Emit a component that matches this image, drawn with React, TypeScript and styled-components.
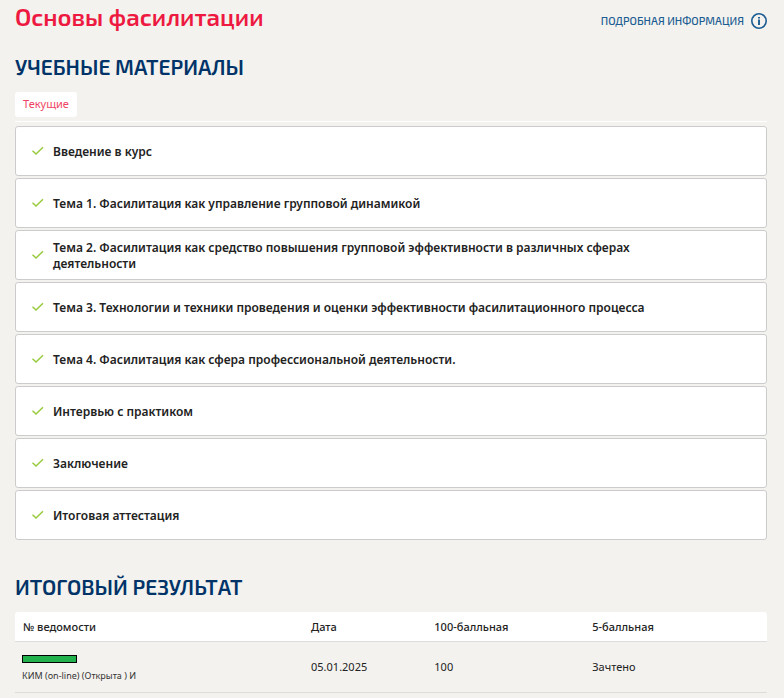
import React from "react";
import styled, { createGlobalStyle } from "styled-components";

const GlobalStyle = createGlobalStyle`
  *, *::before, *::after {
    box-sizing: border-box;
  }

  body {
    margin: 0;
    background: #f3f2ee;
    color: #222222;
    font-family: "Noto Sans", "Open Sans", sans-serif;
    font-size: 12px;
    line-height: 16px;
  }
`;

const headingFont = `"Exo 2", Roboto, "Noto Sans", sans-serif`;

const Page = styled.main`
  padding: 3px 17px 0 15px;
`;

const Header = styled.header`
  display: flex;
  align-items: center;
  justify-content: space-between;
  gap: 16px;
`;

const Title = styled.h1`
  margin: 0;
  font: 600 24px/28px ${headingFont};
  color: #ed1941;
`;

const InfoLink = styled.a`
  display: flex;
  align-items: center;
  gap: 7px;
  padding-top: 8px;
  font: 500 11px/16px ${headingFont};
  text-transform: uppercase;
  text-decoration: none;
  color: #1b5c92;
`;

const SectionTitle = styled.h2<{ $top: number; $bottom: number }>`
  margin: ${(p) => p.$top}px 0 ${(p) => p.$bottom}px;
  font: 600 21px/24px ${headingFont};
  text-transform: uppercase;
  color: #003368;
`;

const Tabs = styled.div`
  display: flex;
  padding-bottom: 4px;
  border-bottom: 1px solid #ffffff;
`;

const Tab = styled.button`
  height: 25px;
  padding: 0 8px 2px;
  border: 0;
  border-radius: 3px;
  background: #ffffff;
  color: #ef4565;
  font: 400 11px/16px "Noto Sans", sans-serif;
`;

const TopicList = styled.ul`
  display: flex;
  flex-direction: column;
  gap: 2px;
  margin: 4px 0 0;
  padding: 0;
  list-style: none;
`;

const Topic = styled.li`
  display: flex;
  align-items: center;
  gap: 9px;
  min-height: 50px;
  padding: 6px 100px 6px 16px;
  border: 1px solid #cccccc;
  border-radius: 3px;
  background: #ffffff;

  svg {
    flex: none;
  }
`;

const TopicName = styled.span`
  padding-top: 2px;
  font-weight: 600;
`;

const Results = styled.table`
  width: 100%;
  table-layout: fixed;
  border-collapse: separate;
  border-spacing: 0;
  font-size: 11px;
`;

const Column = styled.col<{ $share?: string }>`
  width: ${(p) => p.$share ?? "auto"};
`;

const HeadCell = styled.th`
  height: 30px;
  padding: 0 8px;
  border-bottom: 1px solid #dddddb;
  background: #ffffff;
  font-weight: 500;
  text-align: left;

  &:first-child {
    border-top-left-radius: 3px;
  }

  &:last-child {
    border-top-right-radius: 3px;
  }
`;

const Cell = styled.td`
  height: 51px;
  padding: 0 8px;
  border-bottom: 1px solid #dddddb;
  vertical-align: middle;
`;

const RecordCell = styled(Cell)`
  padding: 4px 7px 0;
  font-size: 9px;
`;

const Redaction = styled.div`
  width: 55px;
  height: 8px;
  margin-bottom: 5px;
  border: 1px solid #000000;
  background: #22b14c;
`;

const RecordName = styled.div`
  color: #333333;
`;

const topics = [
  "Введение в курс",
  "Тема 1. Фасилитация как управление групповой динамикой",
  "Тема 2. Фасилитация как средство повышения групповой эффективности в различных сферах деятельности",
  "Тема 3. Технологии и техники проведения и оценки эффективности фасилитационного процесса",
  "Тема 4. Фасилитация как сфера профессиональной деятельности.",
  "Интервью с практиком",
  "Заключение",
  "Итоговая аттестация",
];

const CheckIcon = () => (
  <svg width="12" height="10" viewBox="0 0 12 10" fill="none" aria-hidden="true">
    <path d="M0.5 4.8L4 8L11 1.2" stroke="#98cb3c" strokeWidth="1.5" />
  </svg>
);

const InfoIcon = () => (
  <svg width="16" height="16" viewBox="0 0 16 16" fill="none" aria-hidden="true">
    <circle cx="8" cy="8" r="7.2" stroke="#1b5c92" strokeWidth="1.6" />
    <path d="M8 4V5.6M8 6.6V12" stroke="#1b5c92" strokeWidth="1.9" />
  </svg>
);

export default function App() {
  return (
    <>
      <GlobalStyle />
      <Page>
        <Header>
          <Title>Основы фасилитации</Title>
          <InfoLink href="#info">
            Подробная информация
            <InfoIcon />
          </InfoLink>
        </Header>

        <SectionTitle $top={24} $bottom={13}>
          Учебные материалы
        </SectionTitle>
        <Tabs>
          <Tab type="button">Текущие</Tab>
        </Tabs>
        <TopicList>
          {topics.map((topic) => (
            <Topic key={topic}>
              <CheckIcon />
              <TopicName>{topic}</TopicName>
            </Topic>
          ))}
        </TopicList>

        <SectionTitle $top={35} $bottom={13}>
          Итоговый результат
        </SectionTitle>
        <Results>
          <colgroup>
            <Column $share="38.3%" />
            <Column $share="16.4%" />
            <Column $share="21%" />
            <Column />
          </colgroup>
          <thead>
            <tr>
              <HeadCell scope="col">№ ведомости</HeadCell>
              <HeadCell scope="col">Дата</HeadCell>
              <HeadCell scope="col">100-балльная</HeadCell>
              <HeadCell scope="col">5-балльная</HeadCell>
            </tr>
          </thead>
          <tbody>
            <tr>
              <RecordCell>
                <Redaction />
                <RecordName>КИМ (on-line) (Открыта ) И</RecordName>
              </RecordCell>
              <Cell>05.01.2025</Cell>
              <Cell>100</Cell>
              <Cell>Зачтено</Cell>
            </tr>
          </tbody>
        </Results>
      </Page>
    </>
  );
}
